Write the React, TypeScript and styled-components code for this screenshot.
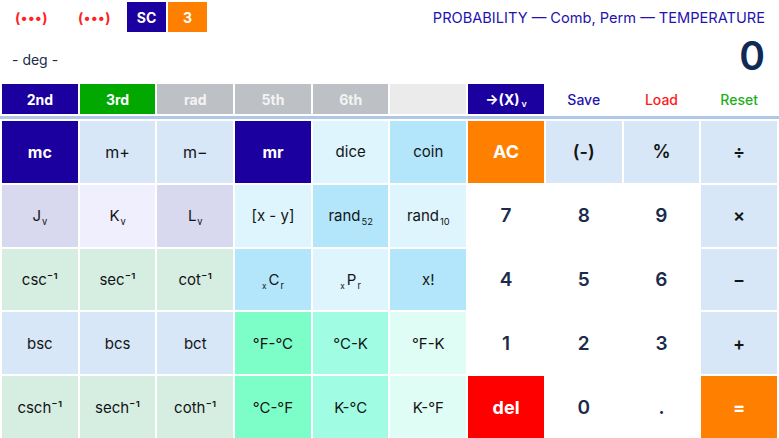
import React from 'react';
import styled, { createGlobalStyle } from 'styled-components';

const Global = createGlobalStyle`
  html, body { margin: 0; padding: 0; background: #ffffff; }
  body { font-family: Inter, "Noto Sans", sans-serif; }
  * { box-sizing: border-box; }
`;

const C = {
  navy: '#1b009f',
  ink: '#1b2b4b',
  lb: '#d7e7f7',
  cyanL: '#def5fd',
  cyan: '#b3e6fb',
  lav: '#d8d8ee',
  lavL: '#efeffd',
  green: '#d6ede2',
  mint: '#7dfdc8',
  mint2: '#a0fde4',
  mint3: '#e0fdf5',
  orange: '#ff8000',
  red: '#ff0000',
  gray: '#bdc1c5',
  blank: '#ebebeb',
  strip: '#b0c8e8',
  white: '#ffffff',
};

const Page = styled.div`
  width: 779px;
  height: 438px;
  display: flex;
  flex-direction: column;
  overflow: hidden;
`;

const Header = styled.div`
  height: 34px;
  display: flex;
  align-items: center;
  padding-right: 14px;
`;

const Dots = styled.span`
  width: 63px;
  text-align: center;
  color: #ff2222;
  font-size: 14px;
  font-weight: 700;
  letter-spacing: 0.5px;
`;

const Badge = styled.span<{ $bg: string }>`
  width: 39px;
  height: 30px;
  margin-left: 1px;
  margin-right: 1px;
  display: flex;
  align-items: center;
  justify-content: center;
  background: ${(p) => p.$bg};
  color: #fff;
  font-weight: 700;
  font-size: 14px;
`;

const Title = styled.span`
  margin-left: auto;
  color: #2412b0;
  font-size: 14.6px;
  font-weight: 400;
  margin-top: 1px;
`;

const Display = styled.div`
  height: 48px;
  display: flex;
  align-items: center;
  justify-content: space-between;
  padding: 0 14px 0 12px;
`;

const Mode = styled.span`
  color: #1c2b4a;
  font-size: 14px;
  margin-top: 2px;
`;

const Value = styled.span`
  color: #0f2a55;
  font-size: 39px;
  font-weight: 600;
  line-height: 1;
  margin-top: -5px;
`;

const FnRow = styled.div`
  margin-top: 2px;
  height: 30px;
  display: grid;
  grid-template-columns: repeat(10, 1fr);
  gap: 2px;
  padding: 0 2px;
`;

const FnKey = styled.div<{ $bg?: string; $fg: string; $bold?: boolean }>`
  display: flex;
  align-items: center;
  justify-content: center;
  background: ${(p) => p.$bg || 'transparent'};
  color: ${(p) => p.$fg};
  font-size: 14px;
  font-weight: ${(p) => (p.$bold ? 700 : 500)};
`;

const Strip = styled.div`
  margin-top: 2px;
  height: 3px;
  background: ${C.strip};
`;

const Grid = styled.div`
  flex: 1;
  display: grid;
  grid-template-columns: repeat(10, 1fr);
  grid-template-rows: repeat(5, 1fr);
  gap: 2px;
  padding: 2px 2px 0;
`;

const Key = styled.div<{ $bg: string; $fg: string; $w: number; $s: number }>`
  display: flex;
  align-items: center;
  justify-content: center;
  background: ${(p) => p.$bg};
  color: ${(p) => p.$fg};
  font-weight: ${(p) => p.$w};
  font-size: ${(p) => p.$s}px;
`;

const Label = styled.span`
  display: inline;
  white-space: nowrap;
`;

const Sub = styled.sub`
  font-size: 0.62em;
  vertical-align: -0.4em;
  line-height: 0;
  margin-left: 1px;
`;

const Pre = styled.sub`
  font-size: 0.55em;
  vertical-align: -0.45em;
  line-height: 0;
  margin-right: 2px;
`;

type K = { label: React.ReactNode; bg: string; fg?: string; w?: number; s?: number };

const strong = (label: React.ReactNode, bg: string): K => ({ label, bg, fg: '#fff', w: 700, s: 18 });
const fn = (label: React.ReactNode, bg: string): K => ({ label, bg, fg: '#141414', w: 400, s: 15 });
const digit = (label: string): K => ({ label, bg: C.white, fg: C.ink, w: 600, s: 19 });
const op = (label: string): K => ({ label, bg: C.lb, fg: '#141414', w: 600, s: 18 });

const rows: K[][] = [
  [
    { ...strong('mc', C.navy), s: 16 },
    { ...fn('m+', C.lb), s: 16 },
    { ...fn('m−', C.lb), s: 16 },
    { ...strong('mr', C.navy), s: 16 },
    fn('dice', C.cyanL),
    fn('coin', C.cyan),
    strong('AC', C.orange),
    op('(-)'),
    op('%'),
    op('÷'),
  ],
  [
    fn(<>J<Sub>v</Sub></>, C.lav),
    fn(<>K<Sub>v</Sub></>, C.lavL),
    fn(<>L<Sub>v</Sub></>, C.lav),
    fn('[x - y]', C.cyanL),
    fn(<>rand<Sub>52</Sub></>, C.cyan),
    fn(<>rand<Sub>10</Sub></>, C.cyanL),
    digit('7'),
    digit('8'),
    digit('9'),
    op('×'),
  ],
  [
    fn('csc⁻¹', C.green),
    fn('sec⁻¹', C.green),
    fn('cot⁻¹', C.green),
    fn(<><Pre>x</Pre>C<Sub>r</Sub></>, C.cyan),
    fn(<><Pre>x</Pre>P<Sub>r</Sub></>, C.cyanL),
    fn('x!', C.cyan),
    digit('4'),
    digit('5'),
    digit('6'),
    op('−'),
  ],
  [
    fn('bsc', C.lb),
    fn('bcs', C.lb),
    fn('bct', C.lb),
    fn('°F-°C', C.mint),
    fn('°C-K', C.mint2),
    fn('°F-K', C.mint3),
    digit('1'),
    digit('2'),
    digit('3'),
    op('+'),
  ],
  [
    fn('csch⁻¹', C.green),
    fn('sech⁻¹', C.green),
    fn('coth⁻¹', C.green),
    fn('°C-°F', C.mint),
    fn('K-°C', C.mint2),
    fn('K-°F', C.mint3),
    strong('del', C.red),
    digit('0'),
    digit('.'),
    strong('=', C.orange),
  ],
];

const Arrow = styled.span`
  font-size: 14px;
  font-weight: 700;
`;

const ArrowSub = styled.sub`
  font-size: 9px;
  font-weight: 600;
  margin-left: 2px;
  vertical-align: -2px;
  line-height: 0;
`;

export default function App() {
  return (
    <Page>
      <Global />
      <Header>
        <Dots>(•••)</Dots>
        <Dots>(•••)</Dots>
        <Badge $bg={C.navy}>SC</Badge>
        <Badge $bg={C.orange}>3</Badge>
        <Title>PROBABILITY — Comb, Perm — TEMPERATURE</Title>
      </Header>
      <Display>
        <Mode>- deg -</Mode>
        <Value>0</Value>
      </Display>
      <FnRow>
        <FnKey $bg={C.navy} $fg="#fff" $bold>2nd</FnKey>
        <FnKey $bg="#00a800" $fg="#fff" $bold>3rd</FnKey>
        <FnKey $bg={C.gray} $fg="#f4f4f4" $bold>rad</FnKey>
        <FnKey $bg={C.gray} $fg="#f4f4f4" $bold>5th</FnKey>
        <FnKey $bg={C.gray} $fg="#f4f4f4" $bold>6th</FnKey>
        <FnKey $bg={C.blank} $fg="#fff" />
        <FnKey $bg={C.navy} $fg="#fff">
          <Arrow>→(X)<ArrowSub>v</ArrowSub></Arrow>
        </FnKey>
        <FnKey $fg="#2412b0">Save</FnKey>
        <FnKey $fg="#ff1a1a">Load</FnKey>
        <FnKey $fg="#1fae1f">Reset</FnKey>
      </FnRow>
      <Strip />
      <Grid>
        {rows.flat().map((k, i) => (
          <Key key={i} $bg={k.bg} $fg={k.fg || '#141414'} $w={k.w || 400} $s={k.s || 15}>
            <Label>{k.label}</Label>
          </Key>
        ))}
      </Grid>
    </Page>
  );
}
